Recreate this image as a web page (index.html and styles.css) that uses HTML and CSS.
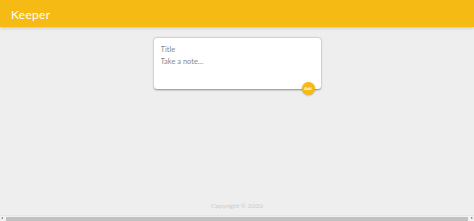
FILE: index.html
```html
<!DOCTYPE html>
<html lang="en">
<head>
    <meta charset="UTF-8">
    <meta name="viewport" content="width=device-width, initial-scale=1.0">
    <title>Keeper</title>
    <link rel="stylesheet" href="styles.css">
</head>
<body>
    <header>
        <h1>Keeper</h1>
    </header>

    <main>
        <form class="create-note">
            <input name="title" placeholder="Title">
            <textarea name="content" placeholder="Take a note..." rows="3"></textarea>
            <button type="button">Add</button>
        </form>
    </main>

    <footer>
        <p>Copyright © 2020</p>
    </footer>

    <!-- fake horizontal scrollbar, like the browser one -->
    <div class="scrollbar">
        <span class="arrow left"></span>
        <span class="thumb"></span>
        <span class="arrow right"></span>
    </div>
</body>
</html>
```

FILE: styles.css
```css
* {
    margin: 0;
    padding: 0;
    box-sizing: border-box;
}

html {
    font-family: 'Montserrat', 'Lato', sans-serif;
}

body {
    background: #eee;
    height: 100vh;
    display: flex;
    flex-direction: column;
    overflow: hidden;
}

header {
    background-color: #f5ba13;
    height: 27px;
    padding: 0 11px;
    display: flex;
    align-items: center;
    box-shadow: 0 0 4px 0 rgba(0, 0, 0, 0.3);
    position: relative;
}

header h1 {
    color: #fff;
    font-family: 'Lato', sans-serif;
    font-weight: 400;
    font-size: 12px;
    letter-spacing: 0.3px;
    margin-top: 1px;
}

main {
    flex: 1;
}

form.create-note {
    position: relative;
    width: 167px;
    height: 51px;
    margin: 11px auto 0 auto;
    background: #fff;
    padding: 6px 7px;
    border-radius: 3px;
    box-shadow: 0 0.5px 2px rgb(138, 137, 137);
}

form.create-note input,
form.create-note textarea {
    display: block;
    width: 100%;
    border: none;
    outline: none;
    resize: none;
    font-family: 'Lato', sans-serif;
    font-size: 7.5px;
    color: #444;
    background: transparent;
}

form.create-note input {
    height: 11px;
    margin-bottom: 2px;
}

form.create-note ::placeholder {
    color: #8a8a8a;
}

form.create-note button {
    position: absolute;
    right: 6px;
    bottom: -6px;
    width: 13px;
    height: 13px;
    border-radius: 50%;
    border: none;
    background: #f5ba13;
    color: #fff;
    font-family: 'Lato', sans-serif;
    font-size: 4px;
    font-weight: bold;
    box-shadow: 0 0.5px 2px rgba(0, 0, 0, 0.3);
    cursor: pointer;
}

footer {
    text-align: center;
    padding-bottom: 6px;
}

footer p {
    color: #ccc;
    font-family: 'Lato', sans-serif;
    font-size: 6.5px;
}

.scrollbar {
    height: 6px;
    display: flex;
    align-items: center;
    background: #f1f1f1;
    border-top: 1px solid #e6e6e6;
}

.scrollbar .thumb {
    flex: 1;
    height: 4px;
    background: #c1c1c1;
    margin: 0 1px;
}

.scrollbar .arrow {
    width: 5px;
    height: 5px;
    position: relative;
}

.scrollbar .arrow::after {
    content: '';
    position: absolute;
    top: 1px;
    border-top: 1.5px solid transparent;
    border-bottom: 1.5px solid transparent;
}

.scrollbar .left::after {
    left: 1px;
    border-right: 2px solid #777;
}

.scrollbar .right::after {
    right: 1px;
    border-left: 2px solid #777;
}
```
